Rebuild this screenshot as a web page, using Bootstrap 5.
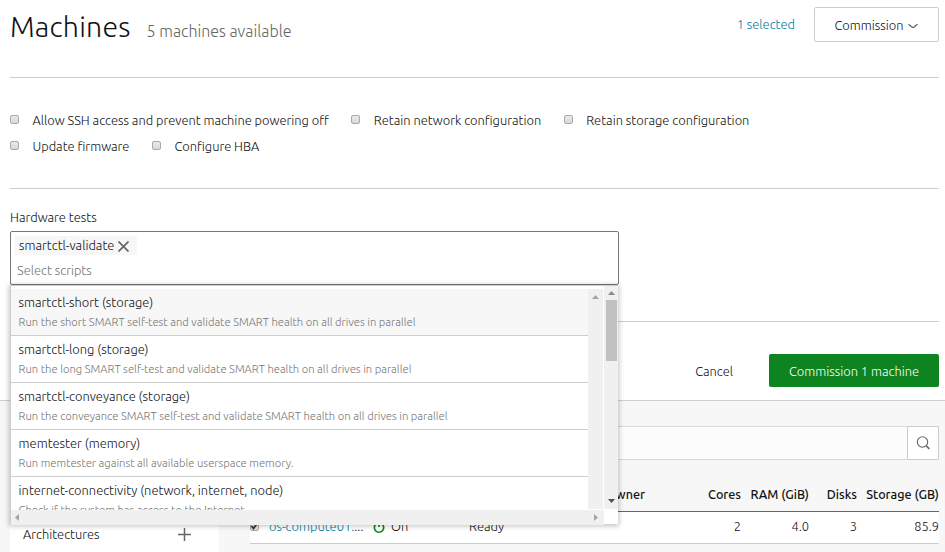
<!DOCTYPE html>
<html lang="en">
<head>
<meta charset="utf-8">
<meta name="viewport" content="width=device-width, initial-scale=1">
<title>Machines</title>
<link rel="stylesheet" href="https://cdn.jsdelivr.net/npm/bootstrap@5.3.0/dist/css/bootstrap.min.css">
<style>
body{font-family:Ubuntu,"Noto Sans","Open Sans",sans-serif;font-size:12.86px;font-weight:300;line-height:20px;color:#111;background:#f7f7f7;height:552px;overflow:hidden}
button{font-weight:inherit;color:inherit}
.panel{height:401px;border-bottom:1px solid #cdcdcd;padding:0 6px 0 10px}
.headline{height:77px}
.title{font-size:28.5px;font-weight:300;line-height:36px;letter-spacing:.2px;margin:8px 16px 0 0}
.subtitle{font-size:16px;color:#666}
.picked{color:#007aa6;margin:14px 19px 0 0}
.btn-plain{width:125px;height:35px;border:1px solid #cdcdcd;border-radius:2px;margin-top:7px;background:#fff;gap:4px}
.btn-plain svg{margin:3px 1px 0 0}
.rule{height:1px;background:#cdcdcd;flex:none}
.options{height:110px;padding-top:29px}
.option{height:26px;margin-right:22.5px}
.box{width:9px;height:9px;border:1px solid #a9a9a9;border-radius:2px;background:linear-gradient(#e9e9e9,#d9d9d9);margin-right:13.5px;margin-bottom:1px}
.hw-label{height:42px;padding-top:18px}
.picker{width:609px;height:54px;border:1px solid #777;border-radius:2px;padding:4px}
.chip{background:#f7f7f7;height:19px;width:122px;padding-left:4px;gap:4px;line-height:19px}
.chip svg{margin-top:2px}
.hint{color:#757575;padding:6px 0 0 2px;line-height:18px}
.after-picker{margin-top:36px}
.actions{height:79px;padding-top:18px}
.cancel{margin-right:36px}
.btn-go{width:170px;height:33px;border-radius:2px;background:#0e8420;color:#fff}
.results{padding:25px 6px 0 10px}
.filters{width:209px;background:#fff;height:126px;margin-right:31px;padding:0 28px 8px 13px}
.filters svg{margin-bottom:3px}
.find{height:34px;border:1px solid #d9d9d9;background:#fcfcfc}
.find-btn{width:32px;height:34px;margin:-1px -1px 0 0;border:1px solid #cdcdcd;border-radius:2px;background:#fff}
.head{height:52px;border-bottom:1px solid #666;font-size:12.6px;font-weight:500;padding-top:25px;line-height:18px}
.line{height:32px;border-bottom:1px solid #cdcdcd;background:#fff;padding-top:4px}
.c-name{width:141px}.c-power{width:78px}.c-state{width:137px}.c-cores{width:135px}.c-ram{width:68px}.c-disks{width:48px}.c-store{width:82px}
.line .box{margin:6px 10px 0 0;flex:none}
.box svg{display:block;margin:-1px}
.host{color:#007aa6}
.power{margin:5px 0 0 10px}
.flyout{left:10px;top:285px;width:608px;height:239px;background:#fff;border-left:1px solid #cdcdcd;border-top:1px solid #cdcdcd;box-shadow:0 1px 5px 1px rgba(17,17,17,.25)}
.scripts{height:224px;padding-top:3px;overflow:hidden}
.script{width:577px;height:47px;border-bottom:1px solid #cdcdcd;padding:3px 0 0 7.6px;flex:none}
.script.hot{background:#f7f7f7}
.desc{font-size:11.24px;color:#757575;line-height:18px;margin-top:1px;white-space:nowrap}
.gutter{width:15px;background:#f0f0f0}
.thumb{width:11px;height:61px;margin-top:5px;background:#c1c1c1}
.inner{margin-top:3px;padding-top:6px;height:220px}
.outer{width:14px;margin-left:1px;padding:5px 0 6px;height:223px}
.hbar{width:593px;height:15px;background:#f0f0f0;padding:0 6px 0 4px}
</style>
<script src="https://cdn.jsdelivr.net/npm/bootstrap@5.3.0/dist/js/bootstrap.bundle.min.js"></script>
</head>
<body class="position-relative">
<section class="panel bg-white">
  <header class="headline d-flex justify-content-between align-items-start">
    <div class="d-flex align-items-baseline"><h1 class="title">Machines</h1><span class="subtitle">5 machines available</span></div>
    <div class="d-flex"><span class="picked">1 selected</span>
      <button class="btn-plain d-flex align-items-center justify-content-center p-0">Commission
        <svg width="10" height="6" viewBox="0 0 10 6" fill="none" stroke="#666" stroke-width="1.3"><path d="M.5 1.2L4 4.1Q5 4.8 6 4.1L9.5 1.2"/></svg></button></div>
  </header>
  <div class="rule"></div>
  <div class="options">
    <div class="d-flex">
      <label class="option d-flex align-items-center"><span class="box"></span><span>Allow SSH access and prevent machine powering off</span></label>
      <label class="option d-flex align-items-center"><span class="box"></span><span>Retain network configuration</span></label>
      <label class="option d-flex align-items-center"><span class="box"></span><span>Retain storage configuration</span></label>
    </div>
    <div class="d-flex">
      <label class="option d-flex align-items-center"><span class="box"></span><span>Update firmware</span></label>
      <label class="option d-flex align-items-center"><span class="box"></span><span>Configure HBA</span></label>
    </div>
  </div>
  <div class="rule"></div>
  <div class="hw-label">Hardware tests</div>
  <div class="picker">
    <div class="chip d-flex align-items-center"><span>smartctl-validate</span>
      <svg width="11" height="11" viewBox="0 0 11 11" stroke="#666" stroke-width="1.7"><path d="M.5.5l10 10M10.5.5l-10 10"/></svg></div>
    <div class="hint">Select scripts</div>
  </div>
  <div class="rule after-picker"></div>
  <div class="actions d-flex justify-content-end align-items-center"><span class="cancel">Cancel</span>
    <button class="btn-go border-0 p-0">Commission 1 machine</button></div>
</section>
<main class="d-flex results">
  <aside class="filters d-flex align-items-end justify-content-between"><span>Architectures</span>
    <svg width="13" height="13" viewBox="0 0 13 13" stroke="#666" stroke-width="1.5"><path d="M6.5 0v13M0 6.5h13"/></svg></aside>
  <div class="flex-grow-1">
    <div class="find d-flex justify-content-end"><span class="find-btn d-flex align-items-center justify-content-center">
      <svg width="14" height="14" viewBox="0 0 14 14" fill="none" stroke="#666" stroke-width="1.1"><circle cx="6.5" cy="6" r="5.2"/><path d="M10.2 9.7l3.1 3.2" stroke-width="1.6"/></svg></span></div>
    <div class="head d-flex"><span class="c-name"></span><span class="c-power"></span><span class="c-state"></span><span class="c-cores d-flex justify-content-between"><span>Owner</span><span>Cores</span></span><span class="c-ram text-end">RAM (GiB)</span><span class="c-disks text-end">Disks</span><span class="c-store text-end">Storage (GB)</span></div>
    <div class="line d-flex">
      <span class="c-name d-flex"><span class="box"><svg width="9" height="9" viewBox="0 0 9 9" fill="none" stroke="#333" stroke-width="1.8"><path d="M1.5 4l2 2.5L7.5 1"/></svg></span><span><span class="host">os-compute01.</span>...</span>
        <svg class="power" width="12" height="13" viewBox="0 0 12 13" fill="none" stroke="#0e8420" stroke-width="1.7"><path d="M3.2 2.8a4.7 4.7 0 1 0 5.6 0M6 0v6"/></svg></span>
      <span class="c-power">On</span><span class="c-state">Ready</span><span class="c-cores text-end">2</span><span class="c-ram text-end">4.0</span><span class="c-disks text-end">3</span><span class="c-store text-end">85.9</span>
    </div>
  </div>
</main>
<div class="flyout position-absolute">
  <div class="d-flex">
    <div class="scripts d-flex flex-column">
      <div class="script hot">smartctl-short (storage)<div class="desc">Run the short SMART self-test and validate SMART health on all drives in parallel</div></div>
      <div class="script">smartctl-long (storage)<div class="desc">Run the long SMART self-test and validate SMART health on all drives in parallel</div></div>
      <div class="script">smartctl-conveyance (storage)<div class="desc">Run the conveyance SMART self-test and validate SMART health on all drives in parallel</div></div>
      <div class="script">memtester (memory)<div class="desc">Run memtester against all available userspace memory.</div></div>
      <div class="script">internet-connectivity (network, internet, node)<div class="desc">Check if the system has access to the Internet.</div></div>
    </div>
    <div class="gutter inner d-flex flex-column align-items-center"><svg width="7" height="4" viewBox="0 0 7 4"><path d="M0 4L3.5 0 7 4z" fill="#a3a3a3"/></svg></div>
    <div class="gutter outer d-flex flex-column align-items-center"><svg width="7" height="4" viewBox="0 0 7 4"><path d="M0 4L3.5 0 7 4z" fill="#8b8b8b"/></svg><span class="thumb"></span>
      <svg class="mt-auto" width="7" height="4" viewBox="0 0 7 4"><path d="M0 0h7L3.5 4z" fill="#505050"/></svg></div>
  </div>
  <div class="hbar d-flex align-items-center justify-content-between"><svg width="4" height="7" viewBox="0 0 4 7"><path d="M4 0v7L0 3.5z" fill="#a3a3a3"/></svg><svg width="4" height="7" viewBox="0 0 4 7"><path d="M0 0v7l4-3.5z" fill="#a3a3a3"/></svg></div>
</div>
</body>
</html>
